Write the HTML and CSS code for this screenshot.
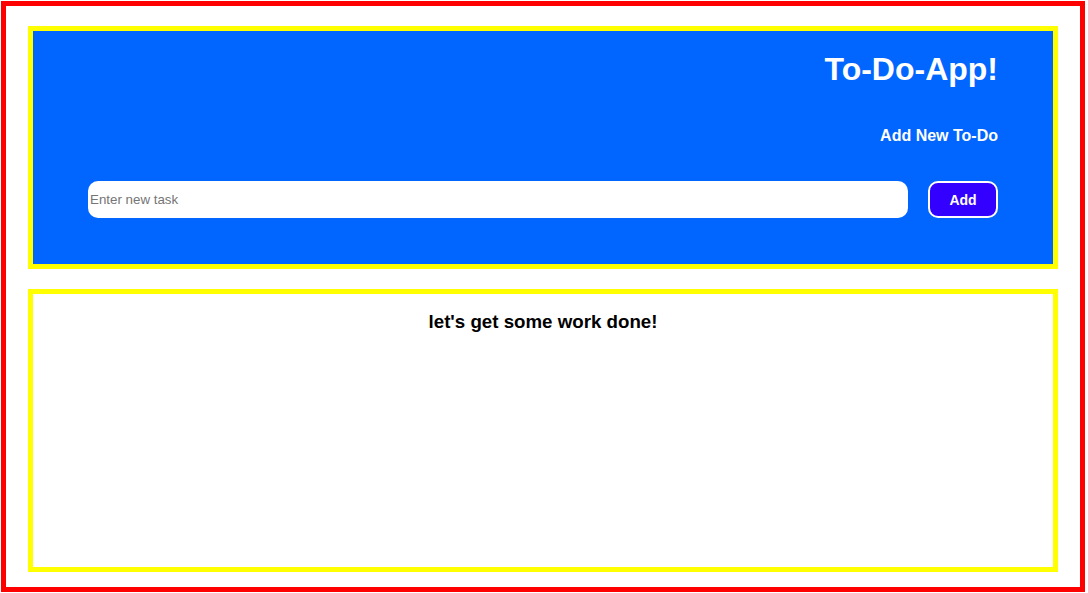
FILE: index.html
```html
<!DOCTYPE html>
<html lang="en">
<head>
<meta charset="utf-8">
<title>To-Do-App!</title>
<link rel="stylesheet" href="styles.css">
</head>
<body>
<div class="frame">
  <header class="header">
    <h1 class="title">To-Do-App!</h1>
    <h3 class="subtitle">Add New To-Do</h3>
    <form class="new-task" onsubmit="return false;">
      <input class="task-input" type="text" placeholder="Enter new task">
      <button class="add-btn" type="submit">Add</button>
    </form>
  </header>
  <main class="list">
    <h3 class="list-title">let's get some work done!</h3>
  </main>
</div>
</body>
</html>
```

FILE: styles.css
```css
html, body {
  margin: 0;
  padding: 0;
  background: #ffffff;
}

body {
  font-family: "Liberation Sans", Arial, sans-serif;
}

.frame {
  box-sizing: border-box;
  margin: 1px 0 0 1px;
  width: 1084px;
  height: 591px;
  border: 5px solid #ff0000;
  padding: 20px 22px 15px;
  display: flex;
  flex-direction: column;
  gap: 20px;
}

.header {
  box-sizing: border-box;
  height: 243px;
  border: 5px solid #ffff00;
  background: #0066ff;
  padding: 20px 55px 0;
  display: flex;
  flex-direction: column;
  color: #ffffff;
}

.title {
  margin: 0;
  font-size: 32px;
  line-height: 37px;
  font-weight: bold;
  text-align: right;
}

.subtitle {
  margin: 39px 0 0;
  font-size: 16px;
  line-height: 18px;
  font-weight: bold;
  text-align: right;
}

.new-task {
  margin: 36px 0 0;
  display: flex;
  gap: 20px;
}

.task-input {
  flex: 1;
  box-sizing: border-box;
  height: 37px;
  border: none;
  border-radius: 10px;
  padding: 0 2px;
  font-family: "Liberation Sans", Arial, sans-serif;
  font-size: 13.33px;
  color: #000000;
  background: #ffffff;
  outline: none;
}

.task-input::placeholder {
  color: #757575;
}

.add-btn {
  box-sizing: border-box;
  width: 70px;
  height: 37px;
  border: 2px solid #ffffff;
  border-radius: 10px;
  background: #3300ff;
  color: #ffffff;
  font-family: "Liberation Sans", Arial, sans-serif;
  font-size: 14px;
  font-weight: bold;
  padding: 0;
  cursor: pointer;
}

.list {
  box-sizing: border-box;
  flex: 1;
  border: 5px solid #ffff00;
  background: #ffffff;
  padding: 17px 0 0;
}

.list-title {
  margin: 0;
  font-size: 18.72px;
  font-weight: bold;
  text-align: center;
  color: #000000;
}
```
